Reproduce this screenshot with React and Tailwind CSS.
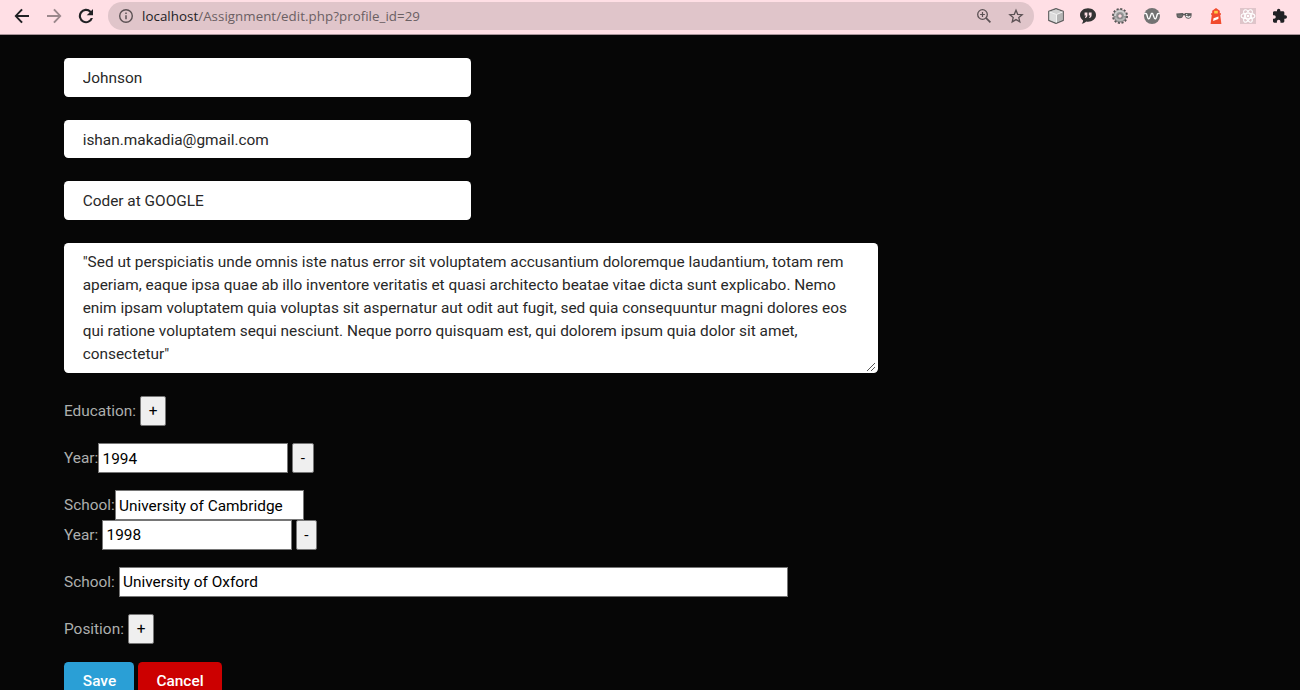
import React from "react";

function ToolbarIcons() {
  return (
    <div className="flex items-center gap-4 pl-[14px]">
      {/* cube */}
      <svg width="16" height="16" viewBox="0 0 16 16">
        <path d="M8 .6 15.300 3.400v9L8 15.400.7 12.400v-9z" fill="#c9c9c9" stroke="#5f5f5f" strokeWidth="1.200" strokeLinejoin="round" />
        <path d="M1.500 3.700 8 1.400l6.500 2.300-6 2.200z" fill="#d0d0d0" />
        <path d="M1.500 4.200 8 6.500v8l-6.500-2.800z" fill="#dcdcdc" />
        <path d="M8.500 6.500 14.500 4.200v7.500l-6 2.800z" fill="#b5b5b5" />
        <path d="M1.500 4 8.500 6.500l6-2.500M8.500 6.500v8" stroke="#f4f4f4" strokeWidth="1" fill="none" />
      </svg>
      {/* quote bubble */}
      <svg width="16" height="16" viewBox="0 0 16 16">
        <path d="M8 .3c4.500 0 8 2.900 8 6.700s-3.500 6.700-8 6.700c-.6 0-1.200 0-1.700-.2-1.200 1.300-3 2.100-4.700 2.100.9-.9 1.500-2 1.500-3.200C1.200 11.200 0 9.200 0 7 0 3.200 3.500.3 8 .3z" fill="#333" />
        <path d="M4.600 4.400h2.800v2.800c0 1.500-.8 2.500-2.300 2.800V8.800c.6-.2.900-.7.900-1.400H4.600zM8.800 4.400h2.800v2.800c0 1.500-.8 2.500-2.300 2.800V8.800c.6-.2.900-.7.900-1.400H8.800z" fill="#fde0e6" />
      </svg>
      {/* gear */}
      <svg width="16" height="16" viewBox="0 0 16 16">
        <circle cx="8" cy="8" r="7" fill="none" stroke="#555" strokeWidth="2" strokeDasharray="2.100 1.565" />
        <circle cx="8" cy="8" r="6.200" fill="#9a9a9a" stroke="#6a6a6a" strokeWidth=".6" />
        <path d="M3 8a5 5 0 0 1 10 0" fill="none" stroke="#cfcfcf" strokeWidth="2" />
        <path d="M3.500 9.500a5 5 0 0 0 9 0" fill="none" stroke="#b8b8b8" strokeWidth="1.600" />
        <circle cx="8" cy="8" r="2.300" fill="#ffdce3" stroke="#858585" strokeWidth="1.100" />
      </svg>
      {/* wave disc */}
      <svg width="16" height="16" viewBox="0 0 16 16">
        <circle cx="8" cy="8" r="8" fill="#737373" />
        <path d="M.8 5.600c1.500-.8 1.900.4 2.300 1.900.5 2 .8 3.400 1.700 3.400 1.600 0 1.600-5.600 3.200-5.600s1.600 5.600 3.200 5.600c.9 0 1.200-1.400 1.700-3.400.4-1.500.8-2.700 2.300-1.900" fill="none" stroke="#fff" strokeWidth="1.400" strokeLinecap="round" />
      </svg>
      {/* glasses */}
      <svg width="16" height="16" viewBox="0 0 16 16">
        <path d="M.3 5.500 6.700 5.100l1.300.8 1.300-.8 6.400.2-.2 2.700c-.3 2-1.500 2.700-3.100 2.700-2 0-3-1-3.400-3L8 6.900l-.9.800c-.3 1.700-1.500 2.500-3.300 2.500C2 10.200.8 9.600.6 8z" fill="#595959" />
        <path d="M1.500 6.400h4.800v1.400c-.4 1.200-1.200 1.500-2.400 1.500s-2.200-.3-2.400-1.500z" fill="#6f6f6f" />
        <path d="M9.700 7.800h1.600l.5.700h1.300l.5-.7h1c-.1 1.400-.9 2-2.400 2s-2.200-.7-2.500-2z" fill="#fff" />
        <path d="M10 6h1.300v1H10z" fill="#ddd" />
      </svg>
      {/* lighthouse */}
      <svg width="16" height="16" viewBox="0 0 16 16">
        <path d="M8 .1 11.800 2.700v2.500h1.200v1.600h-.8L13.400 16H2.600l1.200-9.200H3V5.200h1.200V2.700z" fill="#f14b2d" />
        <path d="M6.200 2.800h3.600v2.700H6.200z" fill="#ffcd45" />
        <path d="m5.500 10.300 5-1.700-.1 2.300-5.300 2z" fill="#fff" />
      </svg>
      {/* atom tile */}
      <svg width="16" height="16" viewBox="0 0 16 16">
        <path d="M0 0h16v16H0z" fill="#dfc5ca" />
        <g fill="none" stroke="#fff" strokeWidth="1.100">
          <ellipse cx="8" cy="8" rx="6.900" ry="2.700" />
          <ellipse cx="8" cy="8" rx="6.900" ry="2.700" transform="rotate(60 8 8)" />
          <ellipse cx="8" cy="8" rx="6.900" ry="2.700" transform="rotate(120 8 8)" />
        </g>
        <circle cx="8" cy="8" r="1.300" fill="#fff" />
      </svg>
      {/* extensions */}
      <svg width="16" height="16" viewBox="0.500 0 24 24" fill="#202124">
        <path d="M20.500 11H19V7c0-1.100-.9-2-2-2h-4V3.500a2.500 2.500 0 0 0-5 0V5H4c-1.100 0-2 .9-2 2v3.800h1.500a2.700 2.700 0 0 1 0 5.400H2V20c0 1.100.9 2 2 2h3.800v-1.500a2.700 2.700 0 0 1 5.400 0V22H17c1.100 0 2-.9 2-2v-4h1.500a2.500 2.500 0 0 0 0-5z" />
      </svg>
    </div>
  );
}

function BrowserBar() {
  return (
    <header className="flex h-[35px] items-start border-b border-[#a89399] bg-[#ffdfe5]">
      <div className="flex h-8 items-center">
        <div className="flex items-center gap-4 pl-[14px]">
          <svg width="16" height="16" viewBox="4 4 16 16" fill="#202124">
            <path d="M19 11H7.900l4.900-4.900-1.500-1.400L4.500 12l6.800 7.300 1.500-1.400L7.900 13H19z" />
          </svg>
          <svg width="16" height="16" viewBox="4 4 16 16" fill="#9b888c">
            <path d="M5 11h11.100l-4.900-4.900 1.500-1.400L19.500 12l-6.800 7.300-1.500-1.400 4.900-4.900H5z" />
          </svg>
          <svg width="16" height="16" viewBox="4 4 16 16" fill="#202124">
            <path d="M17.100 6.900A7.200 7.200 0 1 0 18.950 14h-2.200A5.100 5.100 0 1 1 15.600 8.400L12.700 11.300H19V5z" />
          </svg>
        </div>
        <div className="ml-[14px] flex h-7 w-[926px] items-center rounded-full bg-[#e0c5ca] pl-[10px] pr-[10px]">
          <svg width="16" height="16" viewBox="0 0 16 16" fill="none" stroke="#5b5154">
            <circle cx="8" cy="8" r="6.300" strokeWidth="1.400" />
            <path d="M8 7.300v4" strokeWidth="1.500" />
            <path d="M8 4.600v1.500" strokeWidth="1.500" />
          </svg>
          <div className="ml-2 grow whitespace-nowrap font-['Open_Sans',sans-serif] text-[13.300px] leading-7 tracking-[0.055px] text-[#6b6063]">
            <span className="text-[#202124]">localhost</span>/Assignment/edit.php?profile_id=29
          </div>
          <svg width="16" height="16" viewBox="0 0 16 16" fill="none" stroke="#5b5154">
            <circle cx="6.500" cy="6.500" r="4.800" strokeWidth="1.300" />
            <path d="m9.900 9.900 4.500 4.500" strokeWidth="1.700" />
            <path d="M4.100 6.500h4.800M6.500 4.100v4.800" strokeWidth="1.200" />
          </svg>
          <svg className="ml-4" width="16" height="16" viewBox="0 0 16 16" fill="none" stroke="#5b5154" strokeWidth="1.300">
            <path d="m8 2.200 1.700 4.100 4.500.4-3.400 2.900 1 4.300L8 11.600l-3.800 2.300 1-4.300-3.400-2.900 4.500-.4z" />
          </svg>
        </div>
        <ToolbarIcons />
      </div>
    </header>
  );
}

function Field({ value }) {
  return (
    <input
      type="text"
      defaultValue={value}
      className="mb-[23.100px] block h-[38.500px] w-[407px] rounded-[4.400px] bg-white px-[18.700px] pt-[1.500px] text-[#282828]"
    />
  );
}

function SmallButton({ children, className }) {
  return (
    <button
      className={`h-[30px] rounded-[2px] border border-[#767676] bg-[#efefef] text-center leading-[28px] text-black ${className}`}
    >
      {children}
    </button>
  );
}

function PlainInput({ value, className }) {
  return (
    <input
      type="text"
      defaultValue={value}
      className={`h-[30px] border border-[#767676] bg-white px-[3px] text-black ${className}`}
    />
  );
}

function Label({ children, className }) {
  return <label className={`shrink-0 whitespace-nowrap leading-[30px] ${className}`}>{children}</label>;
}

export default function App() {
  return (
    <div className="h-[690px] w-[1300px] overflow-hidden bg-[#060606] font-['Roboto',sans-serif] text-[15.400px] leading-[23.100px] text-[#adafae]">
      <BrowserBar />
      <main className="pl-16 pt-[23px]">
        <Field value="Johnson" />
        <Field value="ishan.makadia@gmail.com" />
        <Field value="Coder at GOOGLE" />
        <div className="relative w-[814px]">
          <textarea
            className="block h-[130.400px] w-full resize-none overflow-hidden rounded-[4.400px] bg-white px-[18.700px] pt-[8.200px] leading-[23px] text-[#282828]"
            defaultValue={
              '"Sed ut perspiciatis unde omnis iste natus error sit voluptatem accusantium doloremque laudantium, totam rem aperiam, eaque ipsa quae ab illo inventore veritatis et quasi architecto beatae vitae dicta sunt explicabo. Nemo enim ipsam voluptatem quia voluptas sit aspernatur aut odit aut fugit, sed quia consequuntur magni dolores eos qui ratione voluptatem sequi nesciunt. Neque porro quisquam est, qui dolorem ipsum quia dolor sit amet, consectetur"'
            }
          />
          {/* resize grip */}
          <svg className="absolute right-[3px] bottom-[2.400px]" width="8" height="8" viewBox="0 0 8 8" fill="none" stroke="#444" strokeWidth=".9">
            <path d="M0 8l8-8M4 8l4-4" />
          </svg>
        </div>
        <div className="mt-[22.800px] flex">
          <Label className="w-[76px]">Education:</Label>
          <SmallButton className="w-[26px]">+</SmallButton>
        </div>
        <div className="mt-[17px] flex">
          <Label className="w-[34px]">Year:</Label>
          <PlainInput value="1994" className="w-[190px] pt-[2px] pl-[3.500px]" />
          <SmallButton className="ml-1 w-[22px]">-</SmallButton>
        </div>
        <div className="mt-[17px] flex">
          <Label className="w-[51px]">School:</Label>
          <PlainInput value="University of Cambridge" className="w-[189px] pt-[2px]" />
        </div>
        <div className="flex">
          <Label className="w-[38px]">Year:</Label>
          <PlainInput value="1998" className="w-[190px] pl-[3.500px]" />
          <SmallButton className="ml-1 w-[21px]">-</SmallButton>
        </div>
        <div className="mt-[17px] flex">
          <Label className="w-[55px]">School:</Label>
          <PlainInput value="University of Oxford" className="w-[669px]" />
        </div>
        <div className="mt-[17px] flex">
          <Label className="w-[64px]">Position:</Label>
          <SmallButton className="w-[26px]">+</SmallButton>
        </div>
        <div className="mt-[18px] flex gap-1 font-medium text-white">
          <button className="h-[38px] w-[70px] rounded-[4.400px] bg-[#2a9fd6] pt-[1.500px] pl-px">Save</button>
          <button className="h-[38px] w-[84px] rounded-[4.400px] bg-[#cc0000] pt-[1.500px]">Cancel</button>
        </div>
      </main>
    </div>
  );
}
